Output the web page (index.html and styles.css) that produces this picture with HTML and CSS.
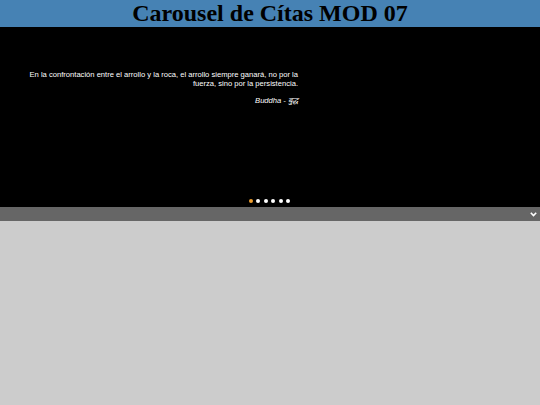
FILE: index.html
```html
<!DOCTYPE html>
<html>
<head>
<meta charset="utf-8">
<link rel="stylesheet" href="styles.css">
</head>
<body>
<header class="header"><h1 class="title">Carousel de Cítas MOD 07</h1></header>
<section class="stage">
  <div class="quote">
    <p class="text">En la confrontación entre el arrollo y la roca, el arrollo siempre ganará, no por la fuerza, sino por la persistencia.</p>
    <p class="author">Buddha - बुद्ध</p>
  </div>
  <div class="dots">
    <span class="dot active"></span><span class="dot"></span><span class="dot"></span><span class="dot"></span><span class="dot"></span><span class="dot"></span>
  </div>
</section>
<div class="bar">
  <svg class="chev" width="7" height="5" viewBox="0 0 7 5"><path d="M0.8 0.8 L3.5 3.6 L6.2 0.8" fill="none" stroke="#fff" stroke-width="1.6"/></svg>
</div>
</body>
</html>
```
FILE: styles.css
```css
html, body { margin: 0; padding: 0; }
body { background: #cccccc; font-family: "Liberation Sans", Arial, sans-serif; }
.header { background: #4682b4; height: 27px; display: flex; justify-content: center; align-items: center; }
.title { margin: 0; font-family: "Liberation Serif", "Times New Roman", serif; font-weight: bold; font-size: 24px; line-height: 27px; color: #000; }
.stage { background: #000; height: 180px; display: flex; flex-direction: column; position: relative; }
.quote { width: 272px; margin: 43px 0 0 26px; text-align: right; color: #fff; font-size: 7.6px; }
.text { margin: 0; line-height: 9px; }
.author { margin: 8px 0 0; font-style: italic; line-height: 9px; }
.dots { position: absolute; left: 249px; top: 172px; display: flex; gap: 3.4px; }
.dot { width: 4px; height: 4px; border-radius: 50%; background: #fff; }
.dot.active { background: #f0a030; }
.bar { background: #666666; height: 14px; display: flex; justify-content: flex-end; align-items: center; padding-right: 3px; }
.chev { display: block; }
```
